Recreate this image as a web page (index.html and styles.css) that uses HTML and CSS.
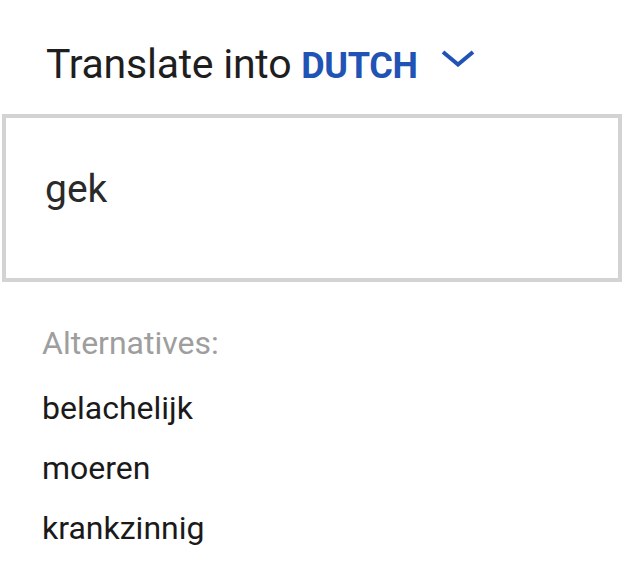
FILE: index.html
```html
<!DOCTYPE html>
<html>
<head>
<meta charset="utf-8">
<link rel="stylesheet" href="styles.css">
</head>
<body>
<div class="page">
  <h1 class="heading">Translate into <span class="lang">DUTCH</span><svg class="chevron" width="34" height="17" viewBox="0 0 34 17"><polyline points="2,2 17,14.5 32,2" fill="none" stroke="#2153b5" stroke-width="4"/></svg></h1>
  <div class="box"><span class="word">gek</span></div>
  <div class="alts">
    <div class="alts-label">Alternatives:</div>
    <div class="alt">belachelijk</div>
    <div class="alt">moeren</div>
    <div class="alt">krankzinnig</div>
  </div>
</div>
</body>
</html>
```
FILE: styles.css
```css
html, body {
  margin: 0;
  padding: 0;
  background: #ffffff;
}
body {
  font-family: Roboto, "Liberation Sans", sans-serif;
  color: #212121;
}
.page {
  width: 634px;
  height: 572px;
  overflow: hidden;
}
.heading {
  margin: 0;
  padding: 40px 0 0 46px;
  font-size: 41px;
  font-weight: 400;
  line-height: 48px;
  letter-spacing: -0.25px;
  color: #1e1e1e;
  white-space: nowrap;
}
.lang {
  font-size: 36px;
  font-weight: 700;
  letter-spacing: -0.3px;
  color: #2153b5;
}
.chevron {
  vertical-align: 11px;
  margin-left: 23px;
}
.box {
  margin: 24px 0 0 2px;
  width: 620px;
  height: 168px;
  box-sizing: border-box;
  border: 4px solid #d3d3d3;
  padding: 48px 0 0 39px;
}
.word {
  font-size: 39px;
  line-height: 46px;
  color: #2a2a2a;
}
.alts {
  margin-top: 31px;
  padding-left: 42px;
  font-size: 32px;
}
.alts-label {
  line-height: 60px;
  color: #9e9e9e;
  margin-bottom: 5px;
}
.alt {
  line-height: 60px;
  color: #1a1a1a;
}
```
